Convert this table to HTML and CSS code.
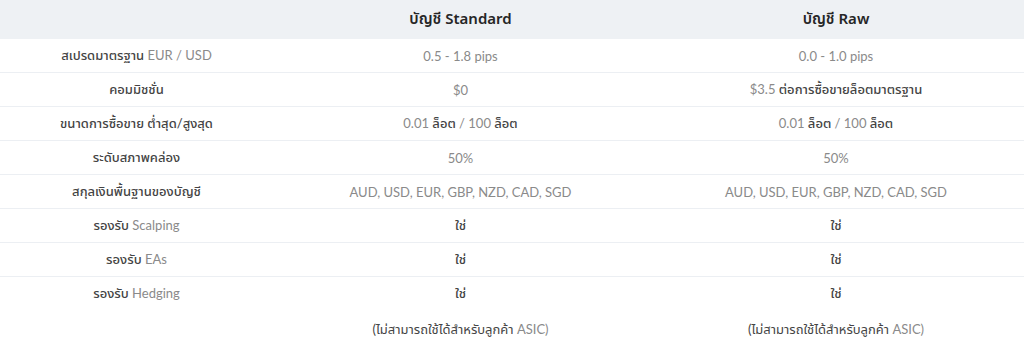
FILE: index.html
```html
<!DOCTYPE html>
<html lang="th">
<head>
<meta charset="utf-8">
<link rel="stylesheet" href="styles.css">
</head>
<body>
<table class="cmp">
  <colgroup><col class="c1"><col class="c2"><col class="c3"></colgroup>
  <thead>
    <tr class="head"><th></th><th>บัญชี Standard</th><th>บัญชี Raw</th></tr>
  </thead>
  <tbody>
    <tr><td><span class="th">สเปรดมาตรฐาน</span> EUR / USD</td><td>0.5 - 1.8 pips</td><td>0.0 - 1.0 pips</td></tr>
    <tr><td><span class="th">คอมมิชชั่น</span></td><td>$0</td><td>$3.5 <span class="th">ต่อการซื้อขายล็อตมาตรฐาน</span></td></tr>
    <tr><td><span class="th">ขนาดการซื้อขาย ต่ำสุด/สูงสุด</span></td><td>0.01 <span class="th">ล็อต</span> / 100 <span class="th">ล็อต</span></td><td>0.01 <span class="th">ล็อต</span> / 100 <span class="th">ล็อต</span></td></tr>
    <tr><td><span class="th">ระดับสภาพคล่อง</span></td><td>50%</td><td>50%</td></tr>
    <tr><td><span class="th">สกุลเงินพื้นฐานของบัญชี</span></td><td>AUD, USD, EUR, GBP, NZD, CAD, SGD</td><td>AUD, USD, EUR, GBP, NZD, CAD, SGD</td></tr>
    <tr><td><span class="th">รองรับ</span> Scalping</td><td><span class="th">ใช่</span></td><td><span class="th">ใช่</span></td></tr>
    <tr><td><span class="th">รองรับ</span> EAs</td><td><span class="th">ใช่</span></td><td><span class="th">ใช่</span></td></tr>
    <tr class="last"><td><span class="th">รองรับ</span> Hedging</td><td><span class="th">ใช่</span></td><td><span class="th">ใช่</span></td></tr>
    <tr class="note"><td></td><td><span class="tn">(ไม่สามารถใช้ได้สำหรับลูกค้า</span> ASIC)</td><td><span class="tn">(ไม่สามารถใช้ได้สำหรับลูกค้า</span> ASIC)</td></tr>
  </tbody>
</table>
</body>
</html>
```
FILE: styles.css
```css
html, body { margin: 0; padding: 0; background: #fff; }
body { font-family: Lato, "Noto Sans Thai", "Noto Sans", sans-serif; }
.cmp { width: 1024px; border-collapse: collapse; table-layout: fixed; }
.c1 { width: 273px; }
.c2 { width: 375px; }
.c3 { width: 376px; }
.cmp th, .cmp td { text-align: center; padding: 0; }
.head th { height: 39px; background: #eef1f4; color: #262626; font-family: "Noto Sans", "Noto Sans Thai", sans-serif; font-size: 15px; font-weight: 600; }
.cmp td { height: 33px; border-bottom: 1px solid #eceff3; font-size: 13px; color: #8a8a8a; font-weight: 400; }
.th { color: #444; font-weight: 500; }
.tn { color: #444; font-weight: 400; }
.last td { border-bottom: none; height: 34px; }
.note td { height: 37px; border-bottom: none; color: #8a8a8a; }
```
